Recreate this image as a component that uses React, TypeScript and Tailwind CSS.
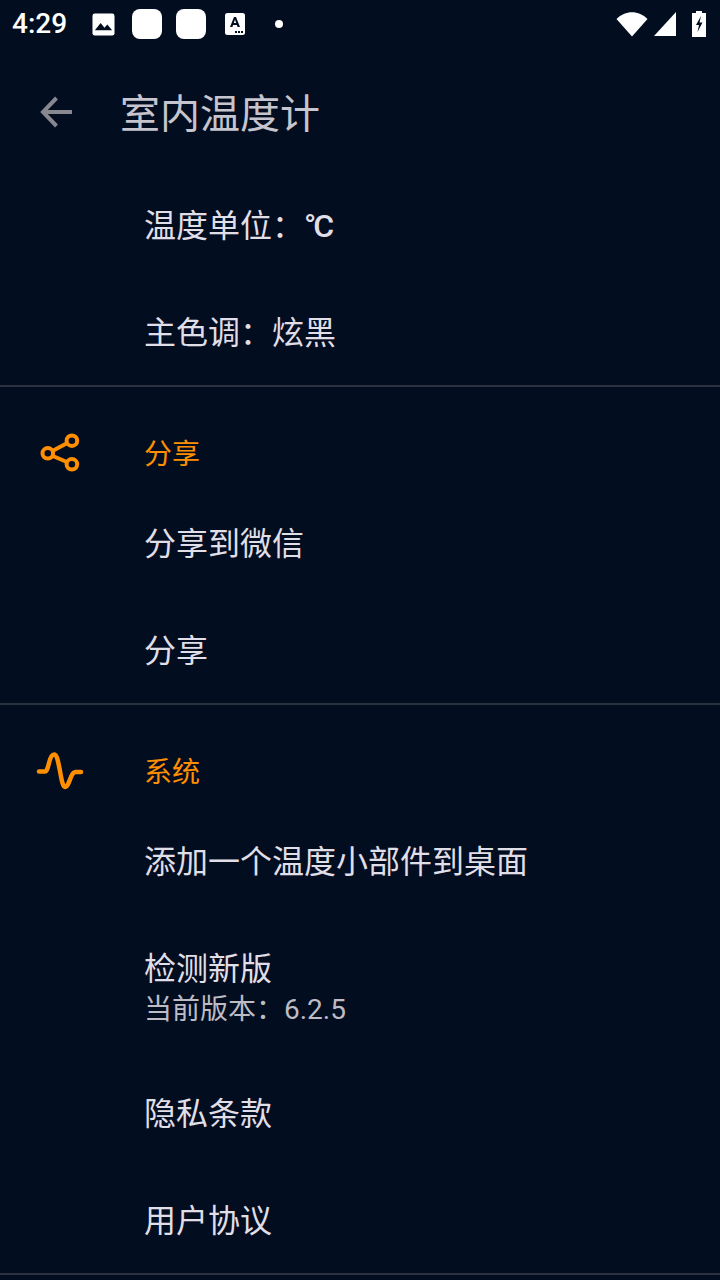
import React from "react";

const font = { fontFamily: 'Roboto, "Noto Sans CJK SC", sans-serif' };

function Row({ title, summary }: { title: React.ReactNode; summary?: string }) {
  return (
    <div className={`flex flex-col justify-center pl-[144px] ${summary ? "h-[145px] pt-[5px]" : "h-[107px] pt-[3px]"}`}>
      <div className="text-[32px] leading-[40px] text-[#e0dee6]">{title}</div>
      {summary && <div className="text-[28px] leading-[38px] text-[#bdbcc4] mt-[2px]">{summary}</div>}
    </div>
  );
}

function Category({ title, icon }: { title: string; icon: React.ReactNode }) {
  return (
    <div className="relative h-[102px] pl-[144px] pt-[49px]">
      <div className="absolute left-[36px] top-[42px] w-[48px] h-[48px]">{icon}</div>
      <div className="text-[28px] leading-[38px] text-[#ff8f00]">{title}</div>
    </div>
  );
}

const Divider = () => <div className="h-[2px] bg-[#2a3240]" />;

const ShareIcon = (
  <svg viewBox="0 0 48 48" className="w-full h-full" fill="none" stroke="#ff8f00" strokeWidth="4">
    <circle cx="35.900" cy="11.700" r="5.300" />
    <circle cx="11.800" cy="24.300" r="5.300" />
    <circle cx="35.900" cy="35.300" r="5.300" />
    <path d="M16.800 21.700 30.900 14.300M16.800 27 30.900 33" />
  </svg>
);

const PulseIcon = (
  <svg viewBox="0 0 48 48" className="w-full h-full" fill="none" stroke="#ff8f00" strokeWidth="4.500" strokeLinecap="round" strokeLinejoin="round">
    <path d="M3 24.500H9C10.500 24.500 11.500 22 13 16C14.500 10 16 7.500 18 7.500C21 7.500 22 14 24 24C25.500 33 27 40 29 40C31.500 40 33 35 35 30C36.500 26.500 37.500 25 39.500 25H45" />
  </svg>
);

export default function App() {
  return (
    <div className="w-[720px] h-[1280px] bg-[#020d20] overflow-hidden" style={font}>
      <div className="relative flex items-center h-[48px] pl-[12px] text-white">
        <span className="text-[28px] font-medium leading-none">4:29</span>
        <svg viewBox="0 0 24 24" className="ml-[25px] w-[23px] h-[23px]">
          <rect x="0.500" y="0.500" width="23" height="23" rx="2.500" fill="#fff" />
          <path d="M3 18 9 10.500 13 15.500 16 12 21 18Z" fill="#020d20" />
        </svg>
        <div className="ml-[17px] w-[30px] h-[30px] rounded-[8px] bg-white" />
        <div className="ml-[14px] w-[30px] h-[30px] rounded-[8px] bg-white" />
        <svg viewBox="0 0 20 22" className="ml-[19px] w-[20px] h-[22px]">
          <rect width="20" height="22" rx="2.500" fill="#fff" />
          <path d="M5 14 9 4h2l4 10h-2.400l-.7-2H8.100l-.7 2ZM8.800 10h2.400L10 6.500Z" fill="#020d20" />
          <rect x="10" y="18" width="2" height="2" fill="#020d20" />
          <rect x="13" y="18" width="2" height="2" fill="#020d20" />
          <rect x="16" y="18" width="2" height="2" fill="#020d20" />
        </svg>
        <div className="ml-[30px] w-[8px] h-[8px] rounded-full bg-white" />
        <div className="ml-auto flex items-center mr-[14px]">
          <svg viewBox="0 0 32 26" className="w-[32px] h-[26px]">
            <path d="M0.500 8C9 -1 23 -1 31.500 8L16 25.500Z" fill="#fff" />
          </svg>
          <svg viewBox="0 0 22 24" className="ml-[6px] w-[22px] h-[24px]">
            <path d="M22 0V24H0Z" fill="#fff" />
          </svg>
          <svg viewBox="0 0 14 26" className="ml-[16px] w-[14px] h-[26px]">
            <path d="M4 0H10V2H14V26H0V2H4Z" fill="#fff" />
            <path d="M9 5 4 14H7L5.500 21 10.500 11.500H7.500Z" fill="#020d20" />
          </svg>
        </div>
      </div>
      <div className="flex items-center h-[123px] pl-[36px] pt-[5px]">
        <svg viewBox="0 0 40 40" className="w-[40px] h-[40px]" fill="none" stroke="#87878f" strokeWidth="4">
          <path d="M36 20H8M20.500 6 7 20 20.500 34" />
        </svg>
        <div className="ml-[44px] mt-[5px] text-[40px] leading-[50px] text-[#c6c4cc]">室内温度计</div>
      </div>
      <Row title={<>温度单位：<span className="tracking-[-3px] font-medium">°C</span></>} />
      <Row title="主色调：炫黑" />
      <Divider />
      <Category title="分享" icon={ShareIcon} />
      <Row title="分享到微信" />
      <Row title="分享" />
      <Divider />
      <Category title="系统" icon={PulseIcon} />
      <Row title="添加一个温度小部件到桌面" />
      <Row title="检测新版" summary="当前版本：6.2.5" />
      <Row title="隐私条款" />
      <Row title="用户协议" />
      <Divider />
    </div>
  );
}
